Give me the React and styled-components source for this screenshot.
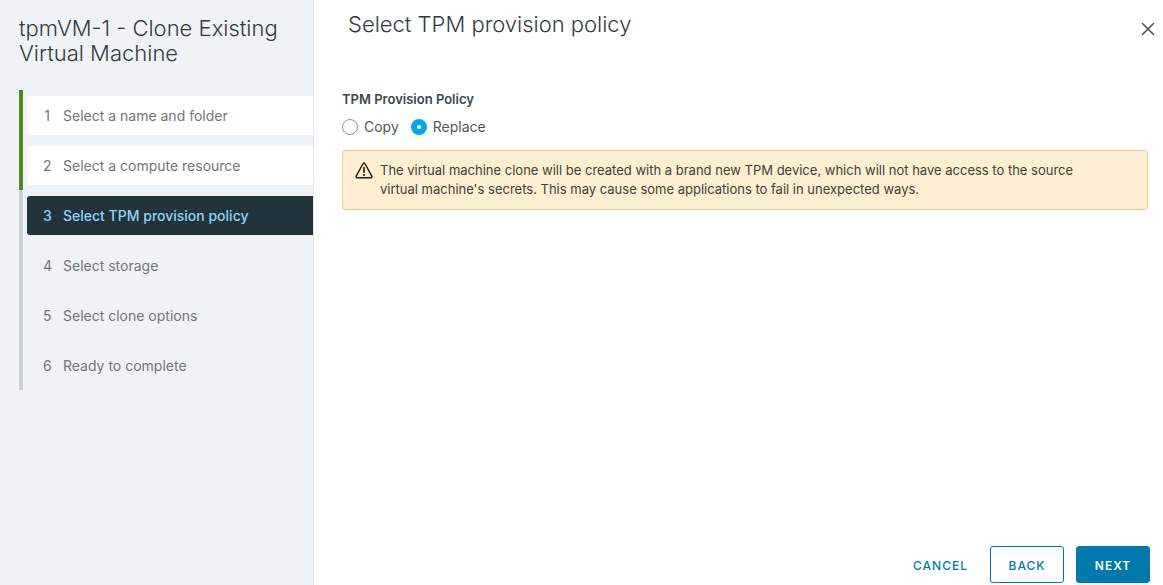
import { useState } from "react";
import styled, { createGlobalStyle } from "styled-components";

const GlobalStyle = createGlobalStyle`
  * {
    box-sizing: border-box;
  }

  body {
    margin: 0;
    background-color: #ffffff;
    color: #565656;
    font-family: Inter, "Open Sans", sans-serif;
    font-size: 14px;
    line-height: 19px;
  }

  button,
  input {
    font: inherit;
  }
`;

const Wizard = styled.div`
  display: flex;
  min-height: 100vh;
`;

const Sidebar = styled.aside`
  width: 27%;
  padding: 16px 0 0 19px;
  border-right: 1px solid #dfe5e9;
  background-color: #eff3f7;
`;

const WizardTitle = styled.h1`
  margin: 0 16px 24px 0;
  color: #333b40;
  font-size: 22px;
  font-weight: 300;
  line-height: 25px;
`;

const Steps = styled.ol`
  margin: 0;
  padding: 0;
  list-style: none;
`;

const Step = styled.li`
  padding: 6px 0 5px 4px;
  border-left: 4px solid ${(props) => (props.$done ? "#4c8a1b" : "#c9d3d6")};
`;

const StepButton = styled.button`
  display: flex;
  width: 100%;
  height: 39px;
  align-items: center;
  gap: 12px;
  padding: 0 16px;
  border: none;
  border-radius: 3px 0 0 3px;
  background-color: ${(props) =>
    props.$current ? "#22333b" : props.$done ? "#ffffff" : "transparent"};
  color: ${(props) => (props.$current ? "#8fd3f7" : "#737578")};
  font-size: 14px;
  font-weight: ${(props) => (props.$current ? 500 : 400)};
  text-align: left;
  cursor: pointer;
`;

const StepNumber = styled.span`
  width: 8px;
  text-align: center;
`;

const Main = styled.main`
  display: flex;
  flex: 1;
  flex-direction: column;
  padding: 9px 13px 2px 28px;
`;

const Header = styled.header`
  display: flex;
  align-items: center;
  justify-content: space-between;
  padding-left: 6px;
`;

const PageTitle = styled.h2`
  margin: 0;
  color: #333b40;
  font-size: 22px;
  font-weight: 300;
  line-height: 30px;
`;

const CloseButton = styled.button`
  display: flex;
  margin-right: -13px;
  padding: 13px 8px 3px;
  border: none;
  background: none;
  color: #454f54;
  cursor: pointer;
`;

const Content = styled.div`
  flex: 1;
  padding: 51px 2px 0 0;
`;

const Policy = styled.fieldset`
  margin: 0;
  padding: 0;
  border: none;
`;

const Legend = styled.legend`
  padding: 0;
  color: #3a474d;
  font-size: 13px;
  font-weight: 600;
`;

const Options = styled.div`
  display: flex;
  gap: 12px;
  padding: 8px 0 14px;
`;

const Option = styled.label`
  display: flex;
  align-items: center;
  gap: 6px;
  font-size: 14px;
`;

const Radio = styled.input`
  appearance: none;
  width: 16px;
  height: 16px;
  margin: 0;
  border: 1px solid #8c9599;
  border-radius: 50%;
  background-color: #ffffff;

  &:checked {
    border: 6px solid #0da3e8;
  }
`;

const Alert = styled.div`
  display: flex;
  gap: 7px;
  padding: 10px 12px;
  border: 1px solid #e9d08b;
  border-radius: 3px;
  background-color: #feefd2;
  color: #454039;
  font-size: 13px;

  svg {
    flex-shrink: 0;
  }
`;

const AlertText = styled.p`
  max-width: 720px;
  margin: 0;
`;

const Footer = styled.footer`
  display: flex;
  justify-content: flex-end;
  gap: 12px;
`;

const Button = styled.button`
  height: 37px;
  min-width: 74px;
  padding: 2px 9px 0;
  border: 1px solid
    ${(props) => (props.$variant === "link" ? "transparent" : "#0079ad")};
  border-radius: 3px;
  background-color: ${(props) =>
    props.$variant === "primary" ? "#0079ad" : "transparent"};
  color: ${(props) => (props.$variant === "primary" ? "#ffffff" : "#0079ad")};
  font-size: 12px;
  font-weight: ${(props) => (props.$variant === "primary" ? 600 : 500)};
  letter-spacing: 1px;
  text-transform: uppercase;
  cursor: pointer;
`;

const steps = [
  "Select a name and folder",
  "Select a compute resource",
  "Select TPM provision policy",
  "Select storage",
  "Select clone options",
  "Ready to complete",
];

const currentStep = 2;

function CloseIcon() {
  return (
    <svg width="14" height="14" viewBox="0 0 14 14" aria-hidden="true">
      <path
        d="M1.5 1.5l11 11M12.5 1.5l-11 11"
        fill="none"
        stroke="currentColor"
        strokeWidth="1.5"
        strokeLinecap="round"
      />
    </svg>
  );
}

function WarningIcon() {
  return (
    <svg width="18" height="19" viewBox="0 0 18 19" aria-hidden="true">
      <path
        d="M8.1 2.5L1.2 15.2a1 1 0 0 0 .9 1.5h13.8a1 1 0 0 0 .9-1.5L9.9 2.5a1 1 0 0 0-1.8 0z"
        fill="none"
        stroke="#24211c"
        strokeWidth="1.5"
        strokeLinejoin="round"
      />
      <path
        d="M9 6.5v4.7"
        stroke="#24211c"
        strokeWidth="1.6"
        strokeLinecap="round"
      />
      <circle cx="9" cy="13.9" r="1" fill="#24211c" />
    </svg>
  );
}

export default function App() {
  const [policy, setPolicy] = useState("Replace");

  return (
    <>
      <GlobalStyle />
      <Wizard>
        <Sidebar>
          <WizardTitle>tpmVM-1 - Clone Existing Virtual Machine</WizardTitle>
          <Steps>
            {steps.map((step, index) => (
              <Step key={step} $done={index < currentStep}>
                <StepButton
                  type="button"
                  $done={index < currentStep}
                  $current={index === currentStep}
                  aria-current={index === currentStep ? "step" : undefined}
                >
                  <StepNumber>{index + 1}</StepNumber>
                  <span>{step}</span>
                </StepButton>
              </Step>
            ))}
          </Steps>
        </Sidebar>

        <Main>
          <Header>
            <PageTitle>Select TPM provision policy</PageTitle>
            <CloseButton type="button" aria-label="Close">
              <CloseIcon />
            </CloseButton>
          </Header>

          <Content>
            <Policy>
              <Legend>TPM Provision Policy</Legend>
              <Options>
                {["Copy", "Replace"].map((name) => (
                  <Option key={name} htmlFor={name}>
                    <Radio
                      type="radio"
                      id={name}
                      name="policy"
                      checked={policy === name}
                      onChange={() => setPolicy(name)}
                    />
                    {name}
                  </Option>
                ))}
              </Options>
            </Policy>
            <Alert role="alert">
              <WarningIcon />
              <AlertText>
                The virtual machine clone will be created with a brand new TPM
                device, which will not have access to the source virtual
                machine's secrets. This may cause some applications to fail in
                unexpected ways.
              </AlertText>
            </Alert>
          </Content>

          <Footer>
            <Button type="button" $variant="link">
              Cancel
            </Button>
            <Button type="button" $variant="outline">
              Back
            </Button>
            <Button type="button" $variant="primary">
              Next
            </Button>
          </Footer>
        </Main>
      </Wizard>
    </>
  );
}
